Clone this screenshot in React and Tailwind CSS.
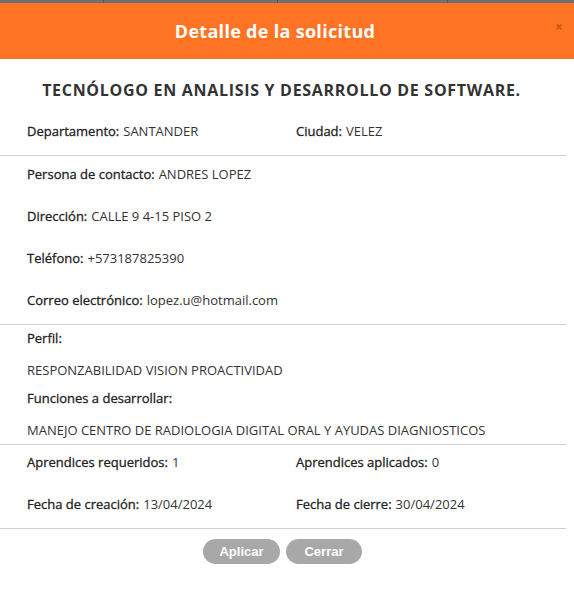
export default function App() {
  const font = { fontFamily: '"Open Sans", "Liberation Sans", sans-serif' };
  const Row = ({ label, value, className = "" }) => (
    <div className={"flex items-center " + className}>
      <span className="text-[#222] [-webkit-text-stroke:0.3px_#222]">{label}:</span>
      {value !== undefined && <span className="ml-1 text-[#333]">{value}</span>}
    </div>
  );
  return (
    <div className="w-[574px] h-[592px] bg-white relative overflow-hidden text-[13px]" style={font}>
      <div className="h-[3px] bg-[#707070] flex">
        <div className="w-[104px] border-r border-[#555]" />
        <div className="w-[174px] border-r border-[#555]" />
        <div className="w-[170px] border-r border-[#555]" />
      </div>
      <div className="h-[56px] bg-[#ff7424] flex items-center justify-center relative pr-[24px]">
        <h1 className="text-white text-[18px] font-bold tracking-[0.3px]">Detalle de la solicitud</h1>
        <span className="absolute right-[11px] top-[17px] text-[14px] font-bold text-black/25 leading-none">×</span>
      </div>
      <h2 className="mt-[20px] h-[22px] flex items-center justify-center pr-[11px] text-[16px] font-bold text-[#333] tracking-[0.7px]">
        TECNÓLOGO EN ANALISIS Y DESARROLLO DE SOFTWARE.
      </h2>
      <div className="grid grid-cols-[269px_1fr] pl-[27px] mt-[19px] h-[24px] items-center">
        <Row label="Departamento" value="SANTANDER" />
        <Row label="Ciudad" value="VELEZ" />
      </div>
      <div className="mt-[11px] mr-[8px] h-px bg-[#d0d0d0]" />
      <div className="pl-[27px] flex flex-col pt-[7px]">
        <Row className="h-[24px]" label="Persona de contacto" value="ANDRES LOPEZ" />
        <Row className="h-[24px] mt-[18px]" label="Dirección" value="CALLE 9 4-15 PISO 2" />
        <Row className="h-[24px] mt-[18px]" label="Teléfono" value="+573187825390" />
        <Row className="h-[24px] mt-[18px]" label="Correo electrónico" value="lopez.u@hotmail.com" />
      </div>
      <div className="mt-[11px] mr-[8px] h-px bg-[#d0d0d0]" />
      <div className="pl-[27px] flex flex-col pt-[2px]">
        <Row className="h-[24px]" label="Perfil" />
        <div className="h-[24px] mt-[8px] flex items-center text-[#333]">RESPONZABILIDAD VISION PROACTIVIDAD</div>
        <Row className="h-[24px] mt-[4px]" label="Funciones a desarrollar" />
        <div className="h-[24px] mt-[8px] flex items-center text-[#333]">MANEJO CENTRO DE RADIOLOGIA DIGITAL ORAL Y AYUDAS DIAGNIOSTICOS</div>
      </div>
      <div className="mt-[1px] mr-[8px] h-px bg-[#d0d0d0]" />
      <div className="grid grid-cols-[269px_1fr] pl-[27px] pt-[6px] gap-y-[18px]">
        <Row className="h-[24px]" label="Aprendices requeridos" value="1" />
        <Row className="h-[24px]" label="Aprendices aplicados" value="0" />
        <Row className="h-[24px]" label="Fecha de creación" value="13/04/2024" />
        <Row className="h-[24px]" label="Fecha de cierre" value="30/04/2024" />
      </div>
      <div className="mt-[11px] mr-[8px] h-px bg-[#d0d0d0]" />
      <div className="flex justify-center gap-[6px] mt-[10px] pr-[9px]">
        <button className="w-[77px] h-[25px] rounded-full bg-[#a8a8a8] text-white text-[13px] font-bold" style={{ fontFamily: '"Liberation Sans", sans-serif' }}>Aplicar</button>
        <button className="w-[76px] h-[25px] rounded-full bg-[#a8a8a8] text-white text-[13px] font-bold" style={{ fontFamily: '"Liberation Sans", sans-serif' }}>Cerrar</button>
      </div>
    </div>
  );
}
